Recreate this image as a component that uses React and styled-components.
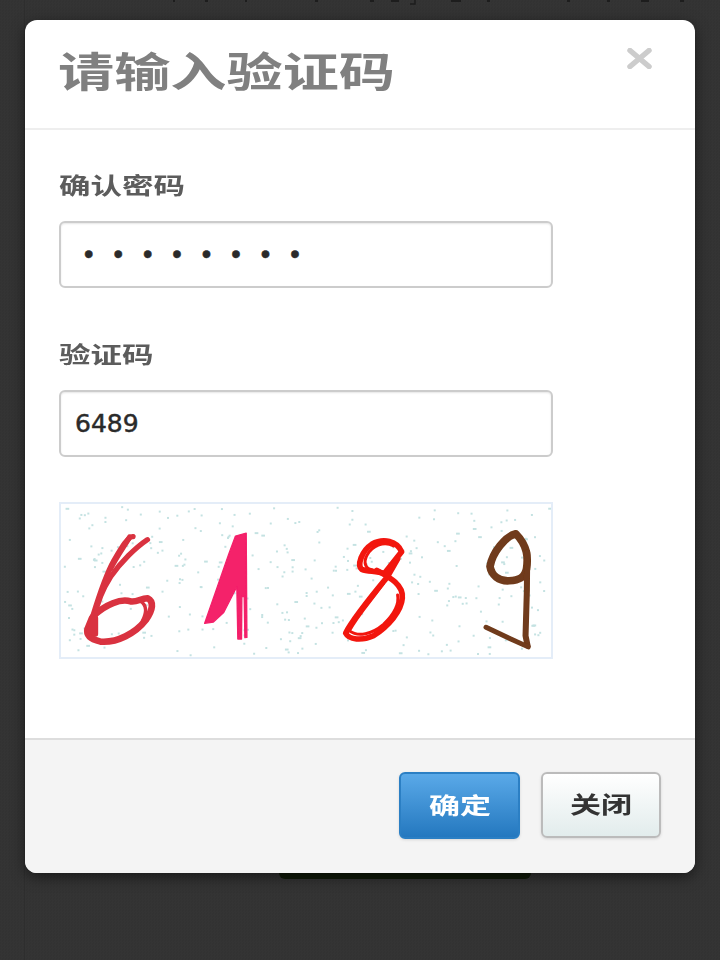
import React from "react";
import styled, { createGlobalStyle } from "styled-components";

const GlobalStyle = createGlobalStyle`
  * {
    box-sizing: border-box;
  }
  html, body {
    margin: 0;
    padding: 0;
    height: 100%;
    background: #333;
    font-family: "Noto Sans CJK SC", "Liberation Sans", sans-serif;
  }
`;

const Page = styled.div`
  position: relative;
  width: 720px;
  height: 960px;
  overflow: hidden;
  background: repeating-conic-gradient(#343434 0 25%, #323232 0 50%) 0 0 / 3px 3px;
`;

// what is left of the page behind the dialog
const Underlay = styled.div`
  display: flex;
  flex-direction: column;
  width: 696px;
  height: 100%;
  margin-left: 24px;
  border-left: 1px solid #2e2e2e;
`;

const Specks = styled.svg`
  display: block;
  flex: none;
  width: 695px;
  height: 6px;
`;

const HiddenButton = styled.div`
  width: 252px;
  height: 30px;
  margin: 843px 0 0 254px;
  border-radius: 6px;
  background: #101a08;
`;

const Modal = styled.div`
  position: absolute;
  top: 20px;
  left: 25px;
  display: flex;
  flex-direction: column;
  width: 670px;
  height: 853px;
  overflow: hidden;
  border-radius: 12px;
  background: #fff;
  box-shadow: 0 4px 14px rgba(0, 0, 0, 0.5);
`;

const Header = styled.div`
  display: flex;
  height: 110px;
  padding: 29px 43px 0 33px;
  border-bottom: 2px solid #eee;
`;

const Stretch = styled.span`
  display: inline-block;
  transform: scaleX(${({ $scale }) => $scale || 1.35});
  transform-origin: ${({ $center }) => ($center ? "center" : "left")};
  white-space: nowrap;
`;

const Title = styled.h3`
  margin: 0;
  font-size: 41px;
  line-height: 40px;
  font-weight: 700;
  color: #808080;
`;

const CloseButton = styled.button`
  display: flex;
  margin: -1px 0 0 auto;
  padding: 0;
  width: 25px;
  height: 21px;
  border: none;
  background: none;
  color: #ccc;
  cursor: pointer;
`;

const Body = styled.div`
  display: flex;
  flex-direction: column;
  height: 608px;
  padding: 40px 0 0 34px;
`;

const Label = styled.label`
  display: block;
  height: 30px;
  margin-bottom: 21px;
  font-size: 23px;
  line-height: 28px;
  font-weight: 700;
  color: #5c5c5c;
`;

const Input = styled.input`
  display: block;
  width: 494px;
  height: 67px;
  margin-bottom: ${({ $gap }) => $gap}px;
  padding: 0 14px;
  border: 2px solid #ccc;
  border-radius: 6px;
  outline: none;
  background: #fff;
  box-shadow: inset 0 1px 2px rgba(0, 0, 0, 0.1);
  font-family: "DejaVu Sans", sans-serif;
  font-size: 25px;
  font-weight: 400;
  color: #2a2a2a;
  -webkit-text-stroke: 0.5px #2a2a2a;
`;

const PasswordInput = styled(Input)`
  padding-left: 23px;
  font-family: "Liberation Sans", sans-serif;
  font-size: 27px;
  letter-spacing: 20px;
`;

const Captcha = styled.svg`
  display: block;
  width: 494px;
  height: 157px;
  border: 2px solid #e4edf8;
`;

const Footer = styled.div`
  display: flex;
  justify-content: flex-end;
  align-items: flex-start;
  gap: 21px;
  height: 135px;
  padding: 32px 34px 0 0;
  border-top: 2px solid #ddd;
  background: #f4f4f4;
`;

const Button = styled.button`
  width: ${({ $primary }) => ($primary ? "121px" : "120px")};
  height: ${({ $primary }) => ($primary ? "67px" : "66px")};
  padding: 0 0 4px;
  border-radius: 6px;
  border: 2px solid ${({ $primary }) => ($primary ? "#2b7fc4" : "#bbb")};
  background: ${({ $primary }) =>
    $primary
      ? "linear-gradient(to bottom, #5aa9e8, #2478bf)"
      : "linear-gradient(to bottom, #fff, #e2ecec)"};
  box-shadow: 0 1px 3px rgba(0, 0, 0, 0.12);
  font-family: inherit;
  font-size: 23px;
  font-weight: 700;
  color: ${({ $primary }) => ($primary ? "#fff" : "#333")};
  cursor: pointer;
`;

// noise of the captcha, in the same coordinates as the digits
const noise = (() => {
  let seed = 4821;
  const next = () => {
    seed = (seed * 16807) % 2147483647;
    return seed / 2147483647;
  };
  for (let i = 0; i < 20; i++) next();
  return Array.from({ length: 360 }, () => {
    const x = 62 + next() * 1450;
    const y = 42 + next() * 455;
    return { x, y, w: next() > 0.88 ? 11 : 6 };
  });
})();

const specks = [
  [148, 2],
  [180, 3],
  [220, 2],
  [290, 3],
  [345, 4],
  [366, 8],
  [426, 10],
  [462, 3],
  [542, 3],
  [582, 3],
  [616, 8],
  [655, 4],
];

const CaptchaImage = () => (
  <Captcha viewBox="57 37 1463 468" preserveAspectRatio="none" aria-label="验证码图片">
    <defs>
      <filter id="soft">
        <feGaussianBlur stdDeviation="1.8" />
      </filter>
    </defs>
    <g fill="#c4e2e2">
      {noise.map((d, i) => (
        <rect key={i} x={d.x} y={d.y} width={d.w} height="6" />
      ))}
    </g>
    <g fill="none" strokeLinecap="round" strokeLinejoin="round" filter="url(#soft)">
      <g stroke="#d9323f" strokeWidth="16">
        <path d="M272 137C258 135 238 170 215 210C190 255 170 320 152 380L138 428" />
        <path d="M315 146C280 170 235 215 205 260C180 300 165 340 158 380" />
        <path d="M262 138C250 160 225 195 205 235" />
        <path d="M155 378C190 345 235 325 265 335C285 338 295 325 315 325C335 335 332 360 310 392C280 432 225 462 175 458C150 452 132 440 136 420L150 385" strokeWidth="20" />
        <path d="M295 335C310 345 315 365 300 395" strokeWidth="10" />
        <path d="M140 425L160 385L160 435Z" strokeWidth="16" fill="#d9323f" />
      </g>
      <path
        d="M578 135L610 126L612 445L606 446L604 320L597 320L596 450L585 450L582 290L542 370L512 398L486 402L558 190Z"
        fill="#f4206a"
        stroke="#f4206a"
        strokeWidth="4"
      />
      <g stroke="#f2140c" strokeWidth="17">
        <path d="M1074 183C1060 150 1020 140 985 160C955 180 940 225 955 237C975 245 1000 240 1022 250L1074 183Z" />
        <path d="M1050 165C1020 150 985 165 970 195C960 215 965 235 985 238" strokeWidth="9" />
        <path d="M1000 240C1040 262 1080 285 1076 325C1073 365 1035 410 990 440C955 456 917 453 907 432C925 395 975 330 1030 262L1062 205" />
        <path d="M1020 280C985 330 945 375 918 425C945 445 985 435 1020 405C1050 375 1068 345 1062 315" strokeWidth="9" />
      </g>
      <g stroke="#6f3a1a" strokeWidth="23">
        <path d="M1415 128C1385 135 1345 185 1338 228C1342 255 1365 274 1395 272C1425 270 1442 262 1447 235C1452 200 1450 165 1415 128Z" />
        <path d="M1449 185L1448 300L1444 440L1450 470" strokeWidth="18" />
        <path d="M1326 414L1400 450L1452 474" strokeWidth="15" />
      </g>
    </g>
  </Captcha>
);

export default function App() {
  return (
    <Page>
      <GlobalStyle />
      <Underlay>
        <Specks viewBox="0 0 695 6" aria-hidden="true">
          {specks.map(([x, w]) => (
            <rect key={x} x={x} y="0" width={w} height="2" fill="#1d1d1d" />
          ))}
          <path d="M390 0v4h-5" fill="none" stroke="#1d1d1d" strokeWidth="1.5" />
        </Specks>
        <HiddenButton />
      </Underlay>
      <Modal>
        <Header>
          <Title>
            <Stretch $scale={1.37}>请输入验证码</Stretch>
          </Title>
          <CloseButton aria-label="关闭">
            <svg width="25" height="21" viewBox="0 0 25 21">
              <path d="M3 2.5L22 18.5M22 2.5L3 18.5" stroke="currentColor" strokeWidth="5.5" strokeLinecap="round" />
            </svg>
          </CloseButton>
        </Header>
        <Body>
          <Label>
            <Stretch $scale={1.37}>确认密码</Stretch>
          </Label>
          <PasswordInput type="password" value="12345678" readOnly $gap={51} />
          <Label>
            <Stretch $scale={1.37}>验证码</Stretch>
          </Label>
          <Input type="text" value="6489" readOnly $gap={45} />
          <CaptchaImage />
        </Body>
        <Footer>
          <Button $primary>
            <Stretch $center>确定</Stretch>
          </Button>
          <Button>
            <Stretch $center>关闭</Stretch>
          </Button>
        </Footer>
      </Modal>
    </Page>
  );
}
